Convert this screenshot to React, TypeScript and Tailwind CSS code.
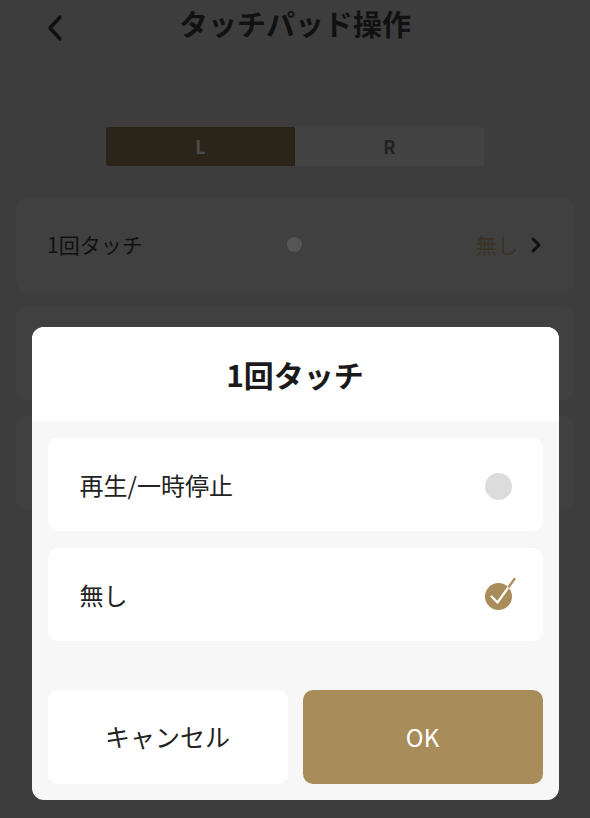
import { useState } from "react"

const font = { fontFamily: '"Noto Sans CJK JP", "Noto Sans", sans-serif' }

function CheckIcon() {
	const d = "M6.5 20.5 L12.5 26.5 L29.5 3"
	return (
		<svg className="absolute left-0 top-[-7px] overflow-visible" width="34" height="34" viewBox="0 0 34 34">
			<defs>
				<clipPath id="check-circle">
					<circle cx="13.5" cy="20.5" r="13.5" />
				</clipPath>
			</defs>
			<circle cx="13.5" cy="20.5" r="13.5" fill="#a88d5a" />
			<path d={d} fill="none" stroke="#a88d5a" strokeWidth="2.2" strokeLinecap="round" strokeLinejoin="round" />
			<path d={d} clipPath="url(#check-circle)" fill="none" stroke="#fff" strokeWidth="2.2" strokeLinecap="round" strokeLinejoin="round" />
		</svg>
	)
}

export default function App() {
	const [selected, setSelected] = useState("none")
	const options = [
		{ id: "play", label: "再生/一時停止" },
		{ id: "none", label: "無し" },
	]

	return (
		<div className="relative w-[590px] h-[818px] overflow-hidden bg-[#3d3d3d]" style={font}>
			{/* 背面のページ (暗転済み) */}
			<div className="flex flex-col">
				<div className="relative h-[52px] flex items-center justify-center">
					<svg className="absolute left-[45px] top-[14px]" width="20" height="28" viewBox="0 0 20 28">
						<path d="M15 3 L5 14 L15 25" fill="none" stroke="#111" strokeWidth="3.5" strokeLinecap="round" strokeLinejoin="round" />
					</svg>
					<span className="text-[29px] font-bold text-[#111] -mt-[5px]">タッチパッド操作</span>
				</div>
				<div className="flex justify-center mt-[75px]">
					<div className="flex w-[378px] h-[39px] rounded-[3px] overflow-hidden bg-[#434343]">
						<div className="flex-1 flex items-center justify-center bg-[#2b2419] text-[#4a4a4a] font-bold text-[18px]">L</div>
						<div className="flex-1 flex items-center justify-center text-[#222] font-bold text-[18px]">R</div>
					</div>
				</div>
				<div className="mx-[16px] mt-[32px] h-[93px] rounded-[10px] bg-[#404040] flex items-center pl-[31px] pr-[32px]">
					<span className="text-[21px] text-[#111] w-[240px]">1回タッチ</span>
					<span className="w-[15px] h-[15px] rounded-full bg-[#555]" />
					<span className="ml-auto text-[21px] text-[#3a3223]">無し</span>
					<svg className="ml-[12px]" width="12" height="18" viewBox="0 0 12 18">
						<path d="M3 3 L9 9 L3 15" fill="none" stroke="#111" strokeWidth="3" strokeLinecap="round" strokeLinejoin="round" />
					</svg>
				</div>
				<div className="mx-[16px] mt-[16px] h-[93px] rounded-[10px] bg-[#404040]" />
				<div className="mx-[16px] mt-[16px] h-[93px] rounded-[10px] bg-[#404040]" />
			</div>

			{/* ダイアログ */}
			<div className="absolute inset-0 flex items-end justify-center pb-[18px]">
				<div className="w-[527px] rounded-[12px] overflow-hidden bg-[#f7f7f7]">
					<div className="h-[94px] bg-white flex items-center justify-center">
						<span className="text-[30px] font-bold text-[#1a1a1a]">1回タッチ</span>
					</div>
					<div className="px-[16px] pt-[17px] pb-[16px] flex flex-col">
						<div className="flex flex-col gap-[17px]">
							{options.map((o) => (
								<button
									key={o.id}
									onClick={() => setSelected(o.id)}
									className="h-[93px] rounded-[10px] bg-white flex items-center pl-[32px] pr-[31px] text-left"
								>
									<span className="text-[24px] text-[#222]">{o.label}</span>
									<span className="ml-auto relative block w-[27px] h-[27px] mt-[4px]">
										{selected === o.id ? (
											<CheckIcon />
										) : (
											<span className="block w-[27px] h-[27px] rounded-full bg-[#dcdcdc]" />
										)}
									</span>
								</button>
							))}
						</div>
						<div className="flex gap-[15px] mt-[49px]">
							<button className="flex-1 h-[94px] rounded-[10px] bg-white text-[25px] text-[#222]">キャンセル</button>
							<button className="flex-1 h-[94px] rounded-[10px] bg-[#a88d5a] text-[24px] text-white">OK</button>
						</div>
					</div>
				</div>
			</div>
		</div>
	)
}
